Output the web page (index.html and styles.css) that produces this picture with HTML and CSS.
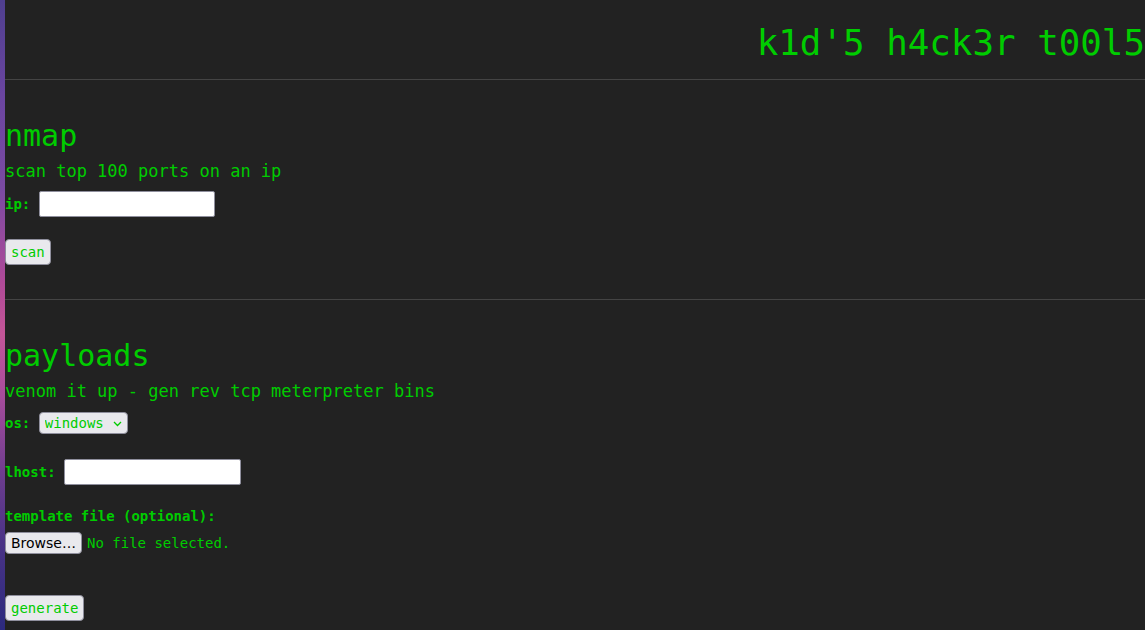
FILE: index.html
```html
<!DOCTYPE html>
<html>
<head>
<meta charset="utf-8">
<title>k1d'5 h4ck3r t00l5</title>
<link rel="stylesheet" href="styles.css">
</head>
<body>
<div class="strip"></div>
<div class="page">
  <header class="top">
    <h1 class="title">k1d'5 h4ck3r t00l5</h1>
  </header>
  <section class="tool tool-nmap">
    <h2 class="tool-name">nmap</h2>
    <p class="tool-desc">scan top 100 ports on an ip</p>
    <form class="tool-form">
      <div class="field field-ip">
        <label class="lbl" for="ip">ip:</label>
        <input class="text-input ip-input" id="ip" type="text">
      </div>
      <div class="actions actions-scan">
        <button class="btn" type="button">scan</button>
      </div>
    </form>
  </section>
  <section class="tool tool-payloads">
    <h2 class="tool-name">payloads</h2>
    <p class="tool-desc">venom it up - gen rev tcp meterpreter bins</p>
    <form class="tool-form">
      <div class="field field-os">
        <label class="lbl" for="os">os:</label>
        <span class="select-wrap">
          <select class="select" id="os"><option>windows</option><option>linux</option></select>
          <svg class="chev" width="9" height="6" viewBox="0 0 9 6"><path d="M1 1 L4.5 4.5 L8 1" fill="none" stroke="#00cc00" stroke-width="1.3"/></svg>
        </span>
      </div>
      <div class="field field-lhost">
        <label class="lbl" for="lhost">lhost:</label>
        <input class="text-input lhost-input" id="lhost" type="text">
      </div>
      <div class="field-stack">
        <label class="lbl lbl-block">template file (optional):</label>
        <div class="file-row">
          <button class="browse" type="button">Browse…</button>
          <span class="file-status">No file selected.</span>
        </div>
      </div>
      <div class="actions actions-gen">
        <button class="btn" type="button">generate</button>
      </div>
    </form>
  </section>
</div>
</body>
</html>
```
FILE: styles.css
```css
html, body {
  margin: 0;
  padding: 0;
  height: 100%;
}
body {
  background: #222222;
  color: #00cc00;
  font-family: "DejaVu Sans Mono", monospace;
  display: flex;
  overflow: hidden;
}
.strip {
  width: 5px;
  flex: 0 0 5px;
  background: linear-gradient(180deg, #4f3f8f 0%, #6a45a0 15%, #7a4aa2 30%, #b04a98 45%, #c35597 53%, #a64c9c 63%, #6b3c8e 76%, #4a3386 86%, #2c2a7e 100%);
}
.page {
  flex: 1;
  min-width: 0;
}
.top {
  height: 79px;
  border-bottom: 1px solid #444444;
  box-sizing: content-box;
}
.title {
  margin: 0;
  padding-top: 22px;
  font-size: 35.85px;
  line-height: 42px;
  font-weight: normal;
  text-align: right;
  white-space: nowrap;
}
.tool {
  padding-top: 38px;
}
.tool-nmap {
  padding-bottom: 34px;
  border-bottom: 1px solid #444444;
}
.tool-name {
  margin: 0;
  font-size: 30px;
  line-height: 35px;
  font-weight: normal;
}
.tool-desc {
  margin: 8px 0 0;
  font-size: 17px;
  line-height: 20px;
}
.tool-form {
  margin: 0;
}
.field {
  display: flex;
  align-items: center;
}
.field-ip { margin-top: 10px; }
.field-os { margin-top: 11px; }
.field-lhost { margin-top: 25px; }
.lbl {
  font-size: 14px;
  line-height: 17px;
  font-weight: bold;
  margin-right: 8.5px;
}
.lbl-block {
  display: block;
  margin: 0;
}
.text-input {
  box-sizing: border-box;
  height: 26px;
  background: #ffffff;
  border: 1px solid #8f8f9d;
  border-radius: 2px;
  padding: 2px 4px;
  font-size: 14px;
  outline: none;
}
.ip-input { width: 176px; }
.lhost-input { width: 177px; }
.select-wrap {
  position: relative;
  display: inline-block;
}
.select {
  appearance: none;
  -webkit-appearance: none;
  box-sizing: border-box;
  width: 89px;
  height: 22px;
  background: #e9e9ed;
  border: 1px solid #8f8f9d;
  border-radius: 4px;
  color: #00cc00;
  font-family: "DejaVu Sans Mono", monospace;
  font-size: 14px;
  padding: 0 0 0 5px;
  line-height: 20px;
}
.chev {
  position: absolute;
  right: 6px;
  top: 9px;
  pointer-events: none;
}
.field-stack {
  margin-top: 23px;
}
.file-row {
  display: flex;
  align-items: center;
  margin-top: 7px;
}
.browse {
  box-sizing: border-box;
  width: 77px;
  height: 22px;
  background: #e9e9ed;
  border: 1px solid #8f8f9d;
  border-radius: 4px;
  color: #000000;
  font-family: "DejaVu Sans", sans-serif;
  font-size: 14px;
  padding: 0;
  margin-right: 5px;
}
.file-status {
  font-size: 14px;
  line-height: 17px;
}
.actions-scan { margin-top: 22px; }
.actions-gen { margin-top: 41px; }
.btn {
  box-sizing: border-box;
  height: 26px;
  background: #e9e9ed;
  border: 1px solid #8f8f9d;
  border-radius: 4px;
  color: #00cc00;
  font-family: "DejaVu Sans Mono", monospace;
  font-size: 14px;
  padding: 0 5px;
  line-height: 24px;
}
```
